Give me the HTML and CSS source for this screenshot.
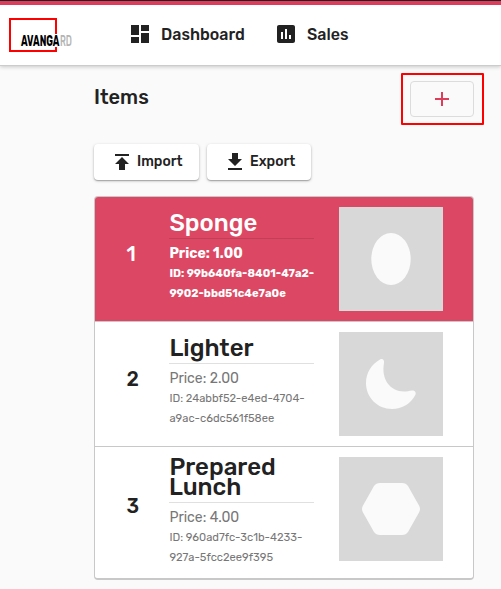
FILE: index.html
```html
<!DOCTYPE html>
<html lang="en">
<head>
    <meta charset="UTF-8">
    <meta name="viewport" content="width=device-width, initial-scale=1.0">
    <title>Items</title>
    <link rel="stylesheet" href="styles.css">
</head>
<body>
    <header class="header">
        <svg class="logo" width="64" height="36" viewBox="0 0 64 36">
            <path d="M47 17V2H1V34H47V30" transform="translate(0 -1)" fill="none" stroke="#f00" stroke-width="2"/>
            <text class="logo-text" x="12" y="28" textLength="38.500" lengthAdjust="spacingAndGlyphs">AVANGA</text>
            <text class="logo-text logo-light" x="51" y="28" textLength="12" lengthAdjust="spacingAndGlyphs">RD</text>
        </svg>
        <nav class="nav">
            <a class="nav-link nav-dashboard">
                <svg width="24" height="24" viewBox="0 0 24 24"><path d="M3 13h8V3H3v10zm0 8h8v-6H3v6zm10 0h8V11h-8v10zm0-18v6h8V3h-8z"/></svg>
                <span>Dashboard</span>
            </a>
            <a class="nav-link">
                <svg width="24" height="24" viewBox="0 0 24 24"><path d="M19 3H5c-1.100 0-2 .9-2 2v14c0 1.100.9 2 2 2h14c1.100 0 2-.9 2-2V5c0-1.100-.9-2-2-2zM9 17H7v-7h2v7zm4 0h-2V7h2v10zm4 0h-2v-4h2v4z"/></svg>
                <span>Sales</span>
            </a>
        </nav>
    </header>

    <main class="content">
        <div class="title-bar">
            <h1>Items</h1>
            <div class="highlight">
                <button class="btn-add" aria-label="Add item">
                    <svg width="24" height="24" viewBox="0 0 24 24"><path d="M19 13h-6v6h-2v-6H5v-2h6V5h2v6h6v2z"/></svg>
                </button>
            </div>
        </div>

        <div class="actions">
            <button class="btn">
                <svg width="24" height="24" viewBox="0 0 24 24"><path d="M5 4v2h14V4H5zm0 10h4v6h6v-6h4l-7-7-7 7z"/></svg>
                <span>Import</span>
            </button>
            <button class="btn btn-export">
                <svg width="24" height="24" viewBox="0 0 24 24"><path d="M19 9h-4V3H9v6H5l7 7 7-7zM5 18v2h14v-2H5z"/></svg>
                <span>Export</span>
            </button>
        </div>

        <div class="items">
            <div class="item selected">
                <div class="number">1</div>
                <div class="details">
                    <h2>Sponge</h2>
                    <p class="price">Price: 1.00</p>
                    <p class="item-id">ID: 99b640fa-8401-47a2-<br>9902-bbd51c4e7a0e</p>
                </div>
                <svg class="thumb" width="104" height="104" viewBox="0 0 104 104">
                    <ellipse cx="52" cy="52" rx="19.700" ry="26"/>
                </svg>
            </div>
            <div class="item">
                <div class="number">2</div>
                <div class="details">
                    <h2>Lighter</h2>
                    <p class="price">Price: 2.00</p>
                    <p class="item-id">ID: 24abbf52-e4ed-4704-<br>a9ac-c6dc561f58ee</p>
                </div>
                <svg class="thumb" width="104" height="104" viewBox="0 0 104 104">
                    <path d="M41 27.500C43.500 26.300 45.500 28 45 31C42 47 51 59.500 65 59.500C68 59.500 70 59 73 58.500C76 58.200 77.500 60.500 76.300 63C72 71.500 63 77 53 77C38.500 77 27 65.500 27 51C27 41 32.500 32 41 27.500Z"/>
                </svg>
            </div>
            <div class="item tall">
                <div class="number">3</div>
                <div class="details">
                    <h2>Prepared<br>Lunch</h2>
                    <p class="price">Price: 4.00</p>
                    <p class="item-id">ID: 960ad7fc-3c1b-4233-<br>927a-5fcc2ee9f395</p>
                </div>
                <svg class="thumb" width="104" height="104" viewBox="0 0 104 104">
                    <path d="M41 26H63Q67 26 69 29L80 48.500Q82 52 80 55.500L69 75Q67 78 63 78H41Q37 78 35 75L24 55.500Q22 52 24 48.500L35 29Q37 26 41 26Z"/>
                </svg>
            </div>
        </div>
    </main>
</body>
</html>
```

FILE: styles.css
```css
* {
    box-sizing: border-box;
}

body {
    margin: 0;
    background-color: #fafafa;
    color: #222;
    font-family: Rubik, Roboto, "Liberation Sans", sans-serif;
}

h1, h2, p {
    margin: 0;
}

svg {
    flex: none;
    fill: currentColor;
}

button {
    padding: 0;
    color: inherit;
    font-family: inherit;
}

.header {
    display: flex;
    height: 66px;
    padding-left: 9px;
    background-color: #fff;
    border-top: 1px solid #222;
    border-bottom: 1px solid #ccc;
    box-shadow: inset 0 4px #dd3c5a, 0 1px 4px rgba(0, 0, 0, 0.2);
}

.logo {
    margin-top: 17px;
    overflow: visible;
}

.logo-text {
    fill: #000;
    font-size: 15px;
    font-weight: 700;
}

.logo-light {
    fill: #b5b5b5;
    font-weight: 500;
}

.nav {
    display: flex;
    align-items: center;
    gap: 30px;
    height: 66px;
    margin-left: 55px;
}

.nav-link {
    display: flex;
    align-items: center;
    gap: 9px;
    font-size: 16px;
    font-weight: 500;
}

.nav-dashboard {
    width: 116px;
}

.content {
    width: 390px;
    margin-left: 94px;
    padding-top: 7px;
}

.title-bar {
    display: flex;
    justify-content: space-between;
}

h1 {
    margin-top: 12px;
    font-size: 20px;
    line-height: 24px;
    font-weight: 500;
}

.highlight {
    width: 83px;
    height: 52px;
    padding: 6px 7px;
    border: 2px solid #f00;
    border-radius: 1px;
}

.btn-add {
    display: flex;
    align-items: center;
    justify-content: center;
    width: 64px;
    height: 36px;
    border: 1px solid #dcdcdc;
    border-radius: 4px;
    background: transparent;
    color: #dd3c5a;
}

.actions {
    display: flex;
    gap: 8px;
    margin-top: 19px;
}

.btn {
    display: flex;
    align-items: center;
    gap: 3px;
    width: 105px;
    height: 36px;
    padding: 0 0 0 16px;
    border: 0;
    border-radius: 4px;
    background-color: #fff;
    box-shadow: 0 1px 3px rgba(0, 0, 0, 0.25), 0 1px 1px rgba(0, 0, 0, 0.2);
    font-size: 14px;
    font-weight: 500;
}

.btn span {
    margin-bottom: 2px;
}

.btn-export {
    width: 104px;
}

.items {
    width: 380px;
    margin-top: 16px;
    border: 1px solid #c8c8c8;
    border-bottom-width: 2px;
    border-radius: 4px;
    background-color: #fff;
    overflow: hidden;
}

.item {
    display: flex;
    height: 125px;
    padding-top: 10px;
    border-bottom: 1px solid #c8c8c8;
}

.item.tall {
    height: 131px;
    border-bottom: 0;
}

.number {
    width: 74px;
    padding: 35px 0 0 31.5px;
    font-size: 20px;
    line-height: 24px;
    font-weight: 500;
}

.details {
    width: 145px;
    margin-right: 25px;
    padding-top: 6px;
}

.tall .number {
    padding-top: 37px;
}

.tall .details {
    padding-top: 0;
}

h2 {
    margin-bottom: 5px;
    padding-bottom: 5px;
    border-bottom: 1px solid rgba(0, 0, 0, 0.12);
    font-size: 24px;
    line-height: 20px;
    font-weight: 500;
    text-indent: 0.4px;
}

.price, .item-id {
    padding-left: 0.4px;
    color: #777;
    line-height: 20px;
    white-space: nowrap;
}

.price {
    font-size: 14px;
}

.item-id {
    font-size: 11.2px;
}

.thumb {
    background-color: #d8d8d8;
    fill: #fafafa;
}

.selected {
    background-color: #dc4863;
    color: #fff;
}

.selected .price, .selected .item-id {
    color: #fff;
    font-weight: 700;
}
```
